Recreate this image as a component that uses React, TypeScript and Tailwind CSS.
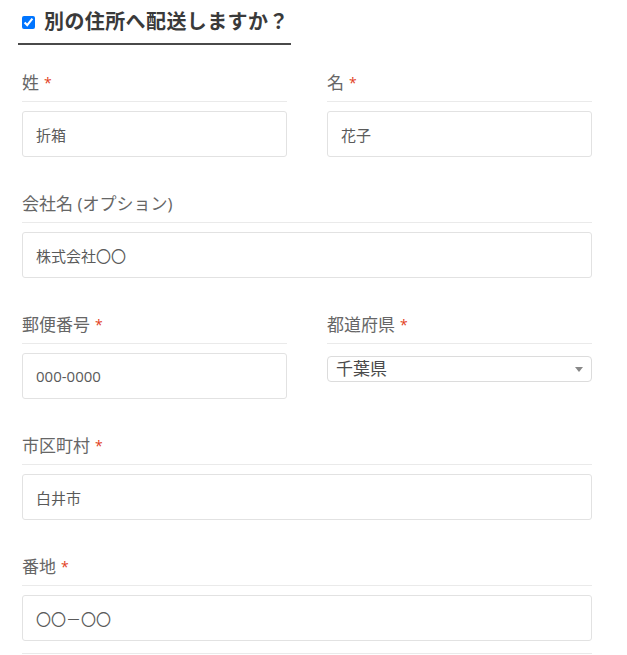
import React from 'react';

const font = { fontFamily: '"Open Sans", "Noto Sans CJK JP", sans-serif' };

function Label({ text, required }: { text: string; required?: boolean }) {
    return (
        <div className="text-[17px] leading-[24px] text-[#666] pb-[6px] border-b border-[#eaeaea]">
            {text}
            {required && <span className="text-[14px] text-[#e2401c] align-top ml-[5px]">*</span>}
        </div>
    );
}

function TextField({ label, value, required, className = '' }: { label: string; value: string; required?: boolean; className?: string }) {
    return (
        <div className={'mb-[35px] ' + className}>
            <Label text={label} required={required} />
            <input
                type="text"
                defaultValue={value}
                className="mt-[9px] block w-full h-[46px] px-[13px] text-[15px] text-[#5a5a5a] bg-white border border-[#e2e2e2] rounded-[3px] outline-none"
            />
        </div>
    );
}

export default function App() {
    return (
        <div className="w-[627px] h-[655px] bg-white overflow-hidden" style={font}>
            <div className="pt-[8px] pl-[18px]">
                <label className="inline-flex items-center pb-[7px] pr-[2px] border-b-2 border-[#4a4a4a]">
                    <input type="checkbox" defaultChecked className="ml-[4px] mr-[9px] w-[13px] h-[13px] mt-[1px]" />
                    <span className="text-[20px] leading-[28px] tracking-[0.4px] font-bold text-[#3a3a3a]">別の住所へ配送しますか？</span>
                </label>
            </div>

            <div className="ml-[22px] w-[570px] mt-[26px]">
                <div className="grid grid-cols-2 gap-x-10">
                    <TextField label="姓" value="折箱" required />
                    <TextField label="名" value="花子" required />
                </div>
                <TextField label="会社名 (オプション)" value="株式会社〇〇" />
                <div className="grid grid-cols-2 gap-x-10">
                    <TextField label="郵便番号" value="000-0000" required />
                    <div className="mb-[35px]">
                        <Label text="都道府県" required />
                        <div className="mt-[12px] h-[26px] flex items-center justify-between pl-[8px] pr-[8px] border border-[#dcdcdc] rounded-[4px] bg-white">
                            <span className="text-[17px] leading-[24px] text-[#4a4a4a]">千葉県</span>
                            <svg width="8" height="5" viewBox="0 0 8 5">
                                <path d="M0 0 L8 0 L4 5 Z" fill="#888" />
                            </svg>
                        </div>
                    </div>
                </div>
                <TextField label="市区町村" value="白井市" required />
                <TextField label="番地" value="〇〇－〇〇" required className="!mb-[12px]" />
                <div className="border-t border-[#eaeaea]" />
            </div>
        </div>
    );
}
